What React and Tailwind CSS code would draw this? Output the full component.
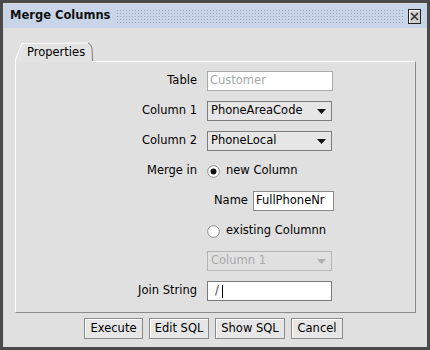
import React from "react";

const font = { fontFamily: '"DejaVu Sans", Verdana, sans-serif' };

function Select({ value, disabled }) {
  return (
    <div
      className={
        "flex h-[20px] w-[125px] items-center justify-between border pl-[3px] pr-[5px] " +
        (disabled
          ? "border-[#b4b4b4] bg-[#e0e0e0] text-[#a9a9a9]"
          : "border-[#7d7d7d] bg-[#e6e6e6] text-black")
      }
    >
      <span>{value}</span>
      <svg width="9" height="5" viewBox="0 0 9 5">
        <path d="M0 0 H9 L4.5 5 Z" fill={disabled ? "#b0b0b0" : "#111"} />
      </svg>
    </div>
  );
}

function Radio({ checked }) {
  return (
    <svg width="13" height="13" viewBox="0 0 13 13">
      <circle cx="6.5" cy="6.5" r="5.8" fill="#fff" stroke="#8a8a8a" strokeWidth="1" />
      {checked && <circle cx="6.5" cy="6.5" r="3" fill="#111" />}
    </svg>
  );
}

function Btn({ children, w }) {
  return (
    <div
      className={
        "flex h-[21px] items-center justify-center border border-[#8a8a8a] bg-[#e6e6e6] shadow-[inset_1px_1px_0_#fff] " +
        w
      }
    >
      {children}
    </div>
  );
}

export default function App() {
  return (
    <div
      className="h-[350px] w-[430px] border-[3px] border-[#4a4a4a] bg-[#e0e0e0] text-[11.5px] text-black"
      style={font}
    >
      <div className="flex h-full flex-col border-l border-t border-[#d8d8d8]">
        {/* title bar */}
        <div className="flex h-[24px] items-center bg-[#c8d5e8] pl-[6px] pr-[6px]">
          <span className="font-bold text-[11.5px] text-[#111]">Merge Columns</span>
          <div className="ml-[6px] mr-[5px] h-[14px] flex-1 bg-[radial-gradient(circle,#95a5bc_0.8px,transparent_1px)] bg-[size:3px_3px]" />
          <div className="flex h-[15px] w-[13px] items-center justify-center border border-[#222] bg-[#d0d0d0] shadow-[inset_1px_1px_0_#fff]">
            <svg width="9" height="9" viewBox="0 0 9 9">
              <path d="M1 1 L8 8 M8 1 L1 8" stroke="#333" strokeWidth="1.6" />
            </svg>
          </div>
        </div>

        {/* body */}
        <div className="flex flex-1 flex-col px-[11px] pt-[14px]">
          {/* tab */}
          <div className="relative h-[19px] w-[78px]">
            <svg className="absolute left-0 top-0" width="78" height="20" viewBox="0 0 78 20">
              <path d="M0.5 20 L0.5 18 L7 1.5 L73 1 Q76 2 77 6 L77.5 20 Z" fill="#e3e3e3" />
              <path d="M0.5 20 L0.5 18 L7 1.5 L73 1" fill="none" stroke="#ffffff" strokeWidth="1" />
              <path d="M73 1 Q76 2 77 6 L77.5 19" fill="none" stroke="#7a7a7a" strokeWidth="1" />
            </svg>
            <span className="absolute left-[12px] top-[2px]">Properties</span>
          </div>
          {/* panel */}
          <div className="h-[252px] border border-b-[#8a8a8a] border-l-white border-r-[#8a8a8a] border-t-white pt-[9px]">
            <div className="grid grid-cols-[181px_1fr] gap-x-[10px] gap-y-[10px]">
              <div className="flex h-[20px] items-center justify-end">Table</div>
              <div className="flex h-[20px] w-[126px] items-center border border-[#ababab] bg-white pl-[2px] text-[#a8a8a8]">
                Customer
              </div>

              <div className="flex h-[20px] items-center justify-end">Column 1</div>
              <Select value="PhoneAreaCode" />

              <div className="flex h-[20px] items-center justify-end">Column 2</div>
              <Select value="PhoneLocal" />

              <div className="flex h-[20px] items-center justify-end">Merge in</div>
              <div className="flex h-[20px] items-center gap-[6px]">
                <Radio checked />
                <span>new Column</span>
              </div>

              <div />
              <div className="flex h-[20px] items-center pl-[7px]">
                <span>Name</span>
                <div className="ml-[5px] flex h-[20px] w-[81px] items-center border border-[#8a8a8a] bg-white pl-[2px]">
                  FullPhoneNr
                </div>
              </div>

              <div />
              <div className="flex h-[20px] items-center gap-[6px]">
                <Radio />
                <span>existing Columnn</span>
              </div>

              <div />
              <Select value="Column 1" disabled />

              <div className="flex h-[20px] items-center justify-end">Join String</div>
              <div className="flex h-[20px] w-[125px] items-center border border-[#7a7a7a] bg-white pl-[7px]">
                <span className="text-[#444]">/</span>
                <span className="ml-[3px] inline-block h-[13px] w-[1px] bg-black" />
              </div>
            </div>
          </div>
          {/* buttons */}
          <div className="mt-[5px] flex gap-[6px] pl-[69px]">
            <Btn w="w-[59px]">Execute</Btn>
            <Btn w="w-[60px]">Edit SQL</Btn>
            <Btn w="w-[70px]">Show SQL</Btn>
            <Btn w="w-[52px]">Cancel</Btn>
          </div>
        </div>
      </div>
    </div>
  );
}
